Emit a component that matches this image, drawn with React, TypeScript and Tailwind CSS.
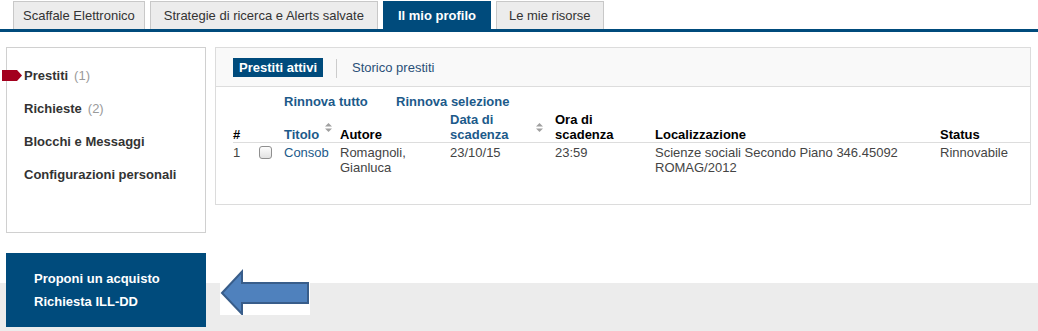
import React from "react";

const SortIcon = () => (
  <svg width="7" height="9" viewBox="0 0 7 9" className="shrink-0">
    <polygon points="3.5,0 7,3.5 0,3.5" fill="#a0a0a0" />
    <polygon points="0,5.5 7,5.5 3.5,9" fill="#a0a0a0" />
  </svg>
);

export default function App() {
  const link = "text-[#1c5a8a]";
  return (
    <div className="w-[1038px] h-[331px] overflow-hidden bg-white font-['Liberation_Sans',Arial,sans-serif] text-[13px] text-[#333]">
      {/* Tabs */}
      <div className="flex items-end pl-[13px] gap-[5px] h-[32px] border-b-[3px] border-[#004b7c]">
        <div className="h-[28px] flex items-center px-[9px] border border-b-0 border-[#c8c8c8] bg-[#ececec] text-[#333]">
          Scaffale Elettronico
        </div>
        <div className="h-[28px] flex items-center px-[13px] border border-b-0 border-[#c8c8c8] bg-[#ececec] text-[#333]">
          Strategie di ricerca e Alerts salvate
        </div>
        <div className="h-[28px] flex items-center px-[14px] border border-b-0 border-[#004b7c] bg-[#004b7c] text-white font-bold">
          Il mio profilo
        </div>
        <div className="h-[28px] flex items-center px-[12px] border border-b-0 border-[#c8c8c8] bg-[#ececec] text-[#333]">
          Le mie risorse
        </div>
      </div>

      {/* Content */}
      <div className="flex items-start mt-[15px] pl-[6px] gap-[9px]">
        {/* Sidebar */}
        <div className="w-[200px] h-[186px] border border-[#d0d0d0] pl-[17px] pt-[11px] flex flex-col">
          <div className="relative h-[33px] flex items-center font-bold text-[#333]">
            <svg
              width="20"
              height="11"
              viewBox="0 0 20 11"
              className="absolute left-[-22px] top-[11px]"
            >
              <polygon points="0,0 15,0 20,5.5 15,11 0,11" fill="#a3001e" />
            </svg>
            Prestiti<span className="font-normal text-[#9a9a9a] ml-[6px]">(1)</span>
          </div>
          <div className="h-[33px] flex items-center font-bold text-[#333]">
            Richieste<span className="font-normal text-[#9a9a9a] ml-[6px]">(2)</span>
          </div>
          <div className="h-[33px] flex items-center font-bold text-[#333]">Blocchi e Messaggi</div>
          <div className="h-[33px] flex items-center font-bold text-[#333]">Configurazioni personali</div>
        </div>

        {/* Main box */}
        <div className="w-[816px] h-[158px] border border-[#dcdcdc]">
          <div className="h-[39px] bg-[#f9f9f9] border-b border-[#dddddd] pl-[17px] pt-[10px] flex items-start">
            <div className="h-[19px] px-[6px] bg-[#004b7c] text-white font-bold leading-[19px]">
              Prestiti attivi
            </div>
            <div className="w-px h-[19px] bg-[#cccccc] mx-[13px] mt-[1px]" />
            <div className="leading-[19px] text-[#2a5078] ml-[2px]">Storico prestiti</div>
          </div>

          <div className="pl-[17px]">
            {/* Rinnova row */}
            <div className="flex pt-[7px] leading-[15px] font-bold">
              <div className="w-[51px]" />
              <div className={`w-[112px] ${link}`}>Rinnova tutto</div>
              <div className={link}>Rinnova selezione</div>
            </div>

            {/* Header */}
            <div className="grid grid-cols-[26px_25px_56px_110px_105px_100px_285px_77px] items-end mt-[3px] leading-[15px] font-bold border-b border-[#dddddd] text-black">
              <div>#</div>
              <div />
              <div className="flex items-center justify-between pr-[8px] h-[30px]">
                <span className={`${link} self-end`}>Titolo</span>
                <SortIcon />
              </div>
              <div>Autore</div>
              <div className="flex items-center justify-between pr-[12px] h-[30px]">
                <span className={link}>
                  Data di
                  <br />
                  scadenza
                </span>
                <SortIcon />
              </div>
              <div>
                Ora di
                <br />
                scadenza
              </div>
              <div>Localizzazione</div>
              <div>Status</div>
            </div>

            {/* Data row */}
            <div className="grid grid-cols-[26px_25px_56px_110px_105px_100px_285px_77px] items-start pt-[2px] leading-[15px] text-[#444]">
              <div>1</div>
              <div className="pt-[1px]">
                <div className="w-[13px] h-[13px] rounded-[3px] border border-[#8f8f8f] bg-gradient-to-b from-[#fdfdfd] to-[#e2e2e2]" />
              </div>
              <div className={link}>Consob</div>
              <div>
                Romagnoli,
                <br />
                Gianluca
              </div>
              <div>23/10/15</div>
              <div>23:59</div>
              <div>
                Scienze sociali Secondo Piano 346.45092
                <br />
                ROMAG/2012
              </div>
              <div>Rinnovabile</div>
            </div>
          </div>
        </div>
      </div>

      {/* Bottom */}
      <div className="flex items-start mt-[20px] h-[78px] bg-[linear-gradient(to_bottom,#ffffff_30px,#ececec_30px)]">
        <div className="ml-[6px] w-[200px] h-[74px] bg-[#004b7c] pl-[28px] pt-[14px] leading-[23px] text-white font-bold">
          <div>Proponi un acquisto</div>
          <div>Richiesta ILL-DD</div>
        </div>
        <div className="ml-[14px] mt-[15px] w-[90px] h-[47px] bg-white">
          <svg width="90" height="47" viewBox="0 0 90 47">
            <polygon
              points="2,25 22,3.5 22,15 88,15 88,35 22,35 22,46 "
              fill="#4f81bd"
              stroke="#385d8a"
              strokeWidth="2"
              strokeLinejoin="miter"
            />
          </svg>
        </div>
      </div>
    </div>
  );
}
